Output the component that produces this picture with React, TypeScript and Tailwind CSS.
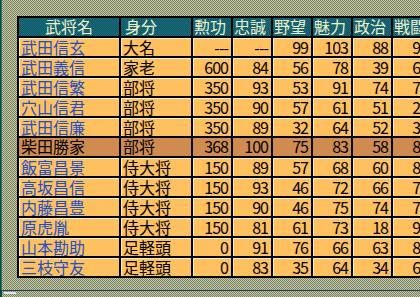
import React from "react";

type Row = { name: string; rank: string; v: string[]; hl?: boolean };

const rows: Row[] = [
  { name: "武田信玄", rank: "大名", v: ["---", "---", "99", "103", "88", "95"] },
  { name: "武田義信", rank: "家老", v: ["600", "84", "56", "78", "39", "68"] },
  { name: "武田信繁", rank: "部将", v: ["350", "93", "53", "91", "74", "77"] },
  { name: "穴山信君", rank: "部将", v: ["350", "90", "57", "61", "51", "25"] },
  { name: "武田信廉", rank: "部将", v: ["350", "89", "32", "64", "52", "38"] },
  { name: "柴田勝家", rank: "部将", v: ["368", "100", "75", "83", "58", "89"], hl: true },
  { name: "飯富昌景", rank: "侍大将", v: ["150", "89", "57", "68", "60", "88"] },
  { name: "高坂昌信", rank: "侍大将", v: ["150", "93", "46", "72", "66", "76"] },
  { name: "内藤昌豊", rank: "侍大将", v: ["150", "90", "46", "75", "74", "72"] },
  { name: "原虎胤", rank: "侍大将", v: ["150", "81", "61", "73", "18", "91"] },
  { name: "山本勘助", rank: "足軽頭", v: ["0", "91", "76", "66", "63", "84"] },
  { name: "三枝守友", rank: "足軽頭", v: ["0", "83", "35", "64", "34", "66"] },
];

const heads = ["勲功", "忠誠", "野望", "魅力", "政治", "戦闘"];

const font = { fontFamily: '"Noto Sans CJK JP", "Noto Sans CJK SC", sans-serif' };

export default function App() {
  return (
    <div
      className="w-[420px] h-[297px] overflow-hidden flex flex-col bg-[image:repeating-conic-gradient(#f4bc68_0%_25%,#4a8ea4_0%_50%)] bg-[length:2px_2px]"
      style={font}
    >
      <div className="flex h-[290px] shrink-0">
        <div className="w-[1px] bg-[#0c4838] shrink-0" />
        <div className="w-[1px] bg-[#2a7a70] shrink-0" />
        <div className="pt-[16px] pl-[15px] flex-1 min-w-0">
          <div className="grid grid-cols-[100px_70px_38px_38px_38px_38px_38px_38px] gap-[2px] bg-black p-[2px] w-max text-[16px] leading-[17px]">
            <div className="h-[18px] text-center text-[#f0f0c8] bg-[image:repeating-conic-gradient(#1a6e7c_0%_25%,#0e5666_0%_50%)] bg-[length:2px_2px]">
              武将名
            </div>
            <div className="h-[18px] pl-[4px] text-[#f0f0c8] bg-[image:repeating-conic-gradient(#1a6e7c_0%_25%,#0e5666_0%_50%)] bg-[length:2px_2px]">
              身分
            </div>
            {heads.map((h) => (
              <div
                key={h}
                className="h-[18px] pl-[1px] whitespace-nowrap text-[#f0f0c8] bg-[image:repeating-conic-gradient(#1a6e7c_0%_25%,#0e5666_0%_50%)] bg-[length:2px_2px]"
              >
                {h}
              </div>
            ))}
            {rows.map((r) => (
              <React.Fragment key={r.name}>
                <div
                  className={
                    r.hl
                      ? "h-[18px] pl-[2px] bg-[#d08c50] text-black"
                      : "h-[18px] pl-[1px] bg-[#ffc060] border-t border-l border-[#fff0c8] text-[#2050c8]"
                  }
                >
                  {r.name}
                </div>
                <div
                  className={
                    r.hl
                      ? "h-[18px] pl-[2px] bg-[#d08c50] text-black"
                      : "h-[18px] pl-[1px] bg-[#ffc060] border-t border-l border-[#fff0c8] text-black"
                  }
                >
                  {r.rank}
                </div>
                {r.v.map((n, i) => (
                  <div
                    key={i}
                    className={
                      r.hl
                        ? "h-[18px] pr-[3px] text-right bg-[#d08c50] text-black tracking-[-1px]"
                        : "h-[18px] pr-[3px] text-right bg-[#ffc060] border-t border-l border-[#fff0c8] text-black tracking-[-1px]"
                    }
                  >
                    {n}
                  </div>
                ))}
              </React.Fragment>
            ))}
          </div>
        </div>
      </div>
      <div className="h-[1px] bg-[#203848] shrink-0" />
      <div className="flex-1 flex">
        <div className="w-[2px] bg-[#0c4838]" />
        <div className="ml-[2px] mt-[1px] w-[12px] h-[2px] bg-[#d8e8f0]" />
      </div>
    </div>
  );
}
